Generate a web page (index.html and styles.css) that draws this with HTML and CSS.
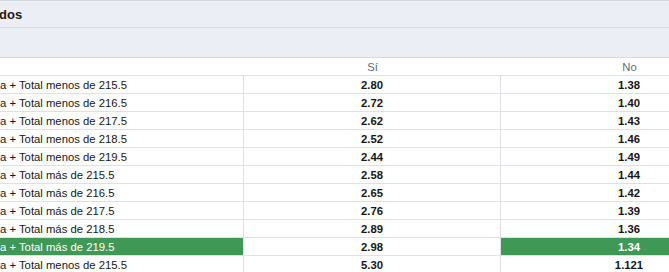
FILE: index.html
```html
<!DOCTYPE html>
<html lang="es">
<head>
<meta charset="utf-8">
<link rel="stylesheet" href="styles.css">
</head>
<body>
<div class="panel">
  <div class="title-bar"><span class="title">dos</span></div>
  <div class="sub-bar"></div>
  <div class="grid">
    <div class="row head">
      <div class="cell name"></div>
      <div class="cell">Sí</div>
      <div class="cell">No</div>
    </div>
    <div class="row"><div class="cell name">a + Total menos de 215.5</div><div class="cell num">2.80</div><div class="cell num">1.38</div></div>
    <div class="row"><div class="cell name">a + Total menos de 216.5</div><div class="cell num">2.72</div><div class="cell num">1.40</div></div>
    <div class="row"><div class="cell name">a + Total menos de 217.5</div><div class="cell num">2.62</div><div class="cell num">1.43</div></div>
    <div class="row"><div class="cell name">a + Total menos de 218.5</div><div class="cell num">2.52</div><div class="cell num">1.46</div></div>
    <div class="row"><div class="cell name">a + Total menos de 219.5</div><div class="cell num">2.44</div><div class="cell num">1.49</div></div>
    <div class="row"><div class="cell name">a + Total más de 215.5</div><div class="cell num">2.58</div><div class="cell num">1.44</div></div>
    <div class="row"><div class="cell name">a + Total más de 216.5</div><div class="cell num">2.65</div><div class="cell num">1.42</div></div>
    <div class="row"><div class="cell name">a + Total más de 217.5</div><div class="cell num">2.76</div><div class="cell num">1.39</div></div>
    <div class="row"><div class="cell name">a + Total más de 218.5</div><div class="cell num">2.89</div><div class="cell num">1.36</div></div>
    <div class="row"><div class="cell name win">a + Total más de 219.5</div><div class="cell num">2.98</div><div class="cell num win">1.34</div></div>
    <div class="row"><div class="cell name">a + Total menos de 215.5</div><div class="cell num">5.30</div><div class="cell num">1.121</div></div>
  </div>
</div>
</body>
</html>
```

FILE: styles.css
```css
html, body {
  margin: 0;
  padding: 0;
  background: #ffffff;
  overflow: hidden;
}
body {
  font-family: "Liberation Sans", Arial, sans-serif;
  font-size: 11.3px;
  color: #161616;
}
.panel {
  width: 669px;
  overflow: hidden;
}
.title-bar {
  height: 26px;
  border-top: 1px solid #d3d7e0;
  border-bottom: 1px solid #d6dae3;
  background: #eceef6;
  display: flex;
  align-items: center;
}
.title {
  font-weight: bold;
  font-size: 13px;
  color: #1a1a1a;
  margin-left: -1px;
}
.sub-bar {
  height: 29px;
  border-bottom: 1px solid #d6dae3;
  background: #eceef6;
}
.row {
  display: grid;
  grid-template-columns: 244px 257px 257px;
  height: 18px;
  box-sizing: border-box;
  border-bottom: 1px solid #dde0e8;
}
.cell {
  box-sizing: border-box;
  border-right: 1px solid #dde0e8;
  display: flex;
  align-items: center;
  justify-content: center;
  white-space: nowrap;
}
.cell.name {
  justify-content: flex-start;
}
.head .cell {
  border-right: none;
  color: #666a70;
}
.num {
  font-weight: bold;
}
.win {
  background: #3f9856;
  color: #ffffff;
}
```
